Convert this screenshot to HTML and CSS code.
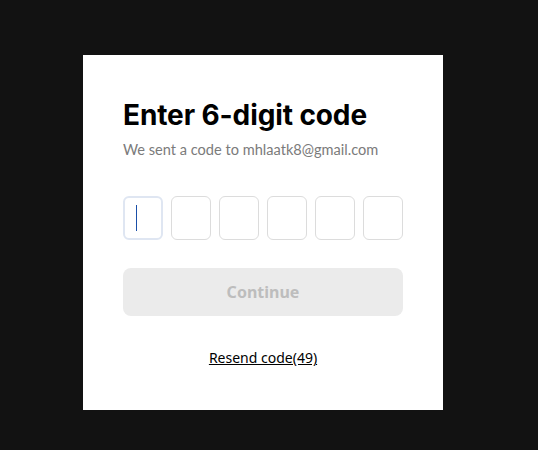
FILE: index.html
```html
<!DOCTYPE html>
<html lang="en">
<head>
<meta charset="utf-8">
<title>Enter 6-digit code</title>
<link rel="stylesheet" href="styles.css">
</head>
<body>
<main class="page">
  <section class="card">
    <h1 class="title">Enter 6-digit code</h1>
    <p class="subtitle">We sent a code to mhlaatk8@gmail.com</p>
    <div class="code-row">
      <div class="code-box active"><span class="caret"></span></div>
      <div class="code-box"></div>
      <div class="code-box"></div>
      <div class="code-box"></div>
      <div class="code-box"></div>
      <div class="code-box"></div>
    </div>
    <button class="continue" type="button" disabled>Continue</button>
    <div class="resend-row"><a class="resend" href="#">Resend code(49)</a></div>
  </section>
</main>
</body>
</html>
```
FILE: styles.css
```css
html, body {
  margin: 0;
  padding: 0;
  background: #121212;
}
.page {
  width: 538px;
  height: 450px;
  display: flex;
  flex-direction: column;
  align-items: flex-start;
  padding: 55px 0 0 83px;
  box-sizing: border-box;
}
.card {
  width: 360px;
  height: 355px;
  box-sizing: border-box;
  background: #ffffff;
  padding: 42px 40px 0 40px;
  display: flex;
  flex-direction: column;
}
.title {
  margin: 0;
  font-family: Inter, "Noto Sans", sans-serif;
  font-weight: 700;
  font-size: 28px;
  line-height: 36px;
  color: #000;
  letter-spacing: -0.1px;
}
.subtitle {
  margin: 7px 0 0 0;
  font-family: Lato, Inter, sans-serif;
  font-size: 14.6px;
  line-height: 20px;
  color: #7b7b7b;
}
.code-row {
  margin-top: 36px;
  display: flex;
  gap: 8px;
}
.code-box {
  width: 40px;
  height: 44px;
  box-sizing: border-box;
  border: 1px solid #dcdcdc;
  border-radius: 6px;
  display: flex;
  align-items: center;
  padding-left: 12px;
}
.code-box.active {
  border: 2px solid #dfe6f2;
  padding-left: 11px;
}
.caret {
  width: 1px;
  height: 26px;
  background: #1a4fa8;
}
.continue {
  margin-top: 28px;
  width: 280px;
  height: 48px;
  border: none;
  border-radius: 8px;
  background: #ebebeb;
  color: #bdbdbd;
  font-family: "Noto Sans", Inter, sans-serif;
  font-weight: 700;
  font-size: 16px;
  padding: 0;
}
.resend-row {
  margin-top: 32px;
  display: flex;
  justify-content: center;
}
.resend {
  font-family: "Noto Sans", "DejaVu Sans", sans-serif;
  font-size: 14px;
  line-height: 20px;
  color: #000;
  text-decoration: underline;
}
```
